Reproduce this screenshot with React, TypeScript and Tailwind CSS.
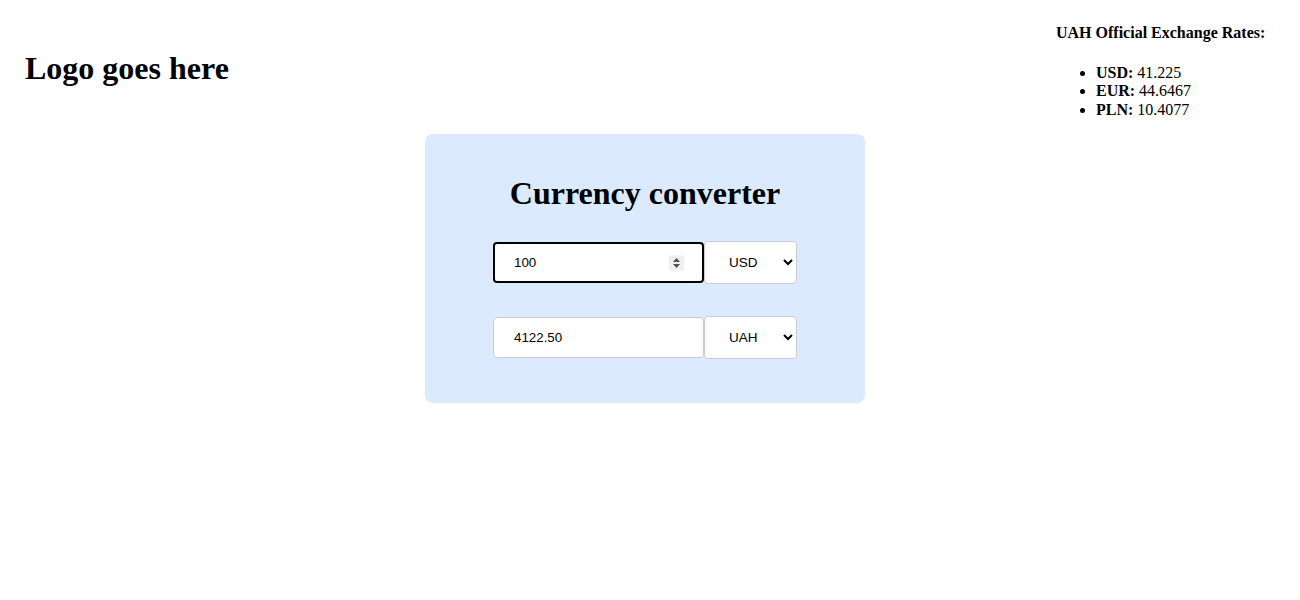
import React from "react";

const serif = { fontFamily: '"Liberation Serif", "Times New Roman", serif' };
const sans = { fontFamily: '"Liberation Sans", Arial, sans-serif' };

function Spinner() {
  return (
    <span className="absolute right-[20px] top-1/2 -translate-y-1/2 w-[15px] h-[15px] bg-[#efefef] flex items-center justify-center pointer-events-none">
      <svg width="9" height="11" viewBox="0 0 9 11">
        <path d="M4.5 0.5 L8 4.5 L1 4.5 Z" fill="#505050" />
        <path d="M4.5 10.5 L8 6.5 L1 6.5 Z" fill="#505050" />
      </svg>
    </span>
  );
}

function Select({ value }: { value: string }) {
  return (
    <select
      defaultValue={value}
      className="w-[93px] h-[43px] bg-white border border-[#cccccc] rounded-[4px] pl-[20px] pr-[4px] text-[13.5px] text-black"
      style={sans}
    >
      <option value="USD">USD</option>
      <option value="EUR">EUR</option>
      <option value="PLN">PLN</option>
      <option value="UAH">UAH</option>
    </select>
  );
}

export default function App() {
  return (
    <div className="w-[1300px] min-h-[600px] bg-white text-black" style={serif}>
      <header className="flex justify-between items-start pl-[25px] pr-[35px]">
        <h1 className="mt-[50px] text-[32px] leading-[37px] font-bold">Logo goes here</h1>
        <div className="w-[209px] h-[134px]">
          <h4 className="mt-[24px] text-[16px] leading-[18px] font-bold whitespace-nowrap">
            UAH Official Exchange Rates:
          </h4>
          <ul className="mt-[22px] list-disc pl-[40px] text-[16px] leading-[18.4px]">
            <li>
              <b>USD:</b> 41.225
            </li>
            <li>
              <b>EUR:</b> 44.6467
            </li>
            <li>
              <b>PLN:</b> 10.4077
            </li>
          </ul>
        </div>
      </header>
      <main className="flex justify-center pr-[10px]">
        <div className="w-[440px] h-[269px] bg-[#dbeafe] rounded-[8px] flex flex-col items-center pt-[41px]">
          <h1 className="text-[32px] leading-[37px] font-bold">Currency converter</h1>
          <div className="mt-[29px] flex items-center">
            <div className="relative">
              <input
                type="text"
                defaultValue="100"
                className="w-[211px] h-[41px] bg-white border-2 border-black rounded-[4px] pl-[19px] text-[13.33px] text-black outline-none"
                style={sans}
              />
              <Spinner />
            </div>
            <Select value="USD" />
          </div>
          <div className="mt-[32px] flex items-center">
            <input
              type="text"
              defaultValue="4122.50"
              className="w-[211px] h-[41px] bg-white border border-[#cccccc] rounded-[4px] pl-[20px] text-[13.33px] text-black outline-none"
              style={sans}
            />
            <Select value="UAH" />
          </div>
        </div>
      </main>
    </div>
  );
}
